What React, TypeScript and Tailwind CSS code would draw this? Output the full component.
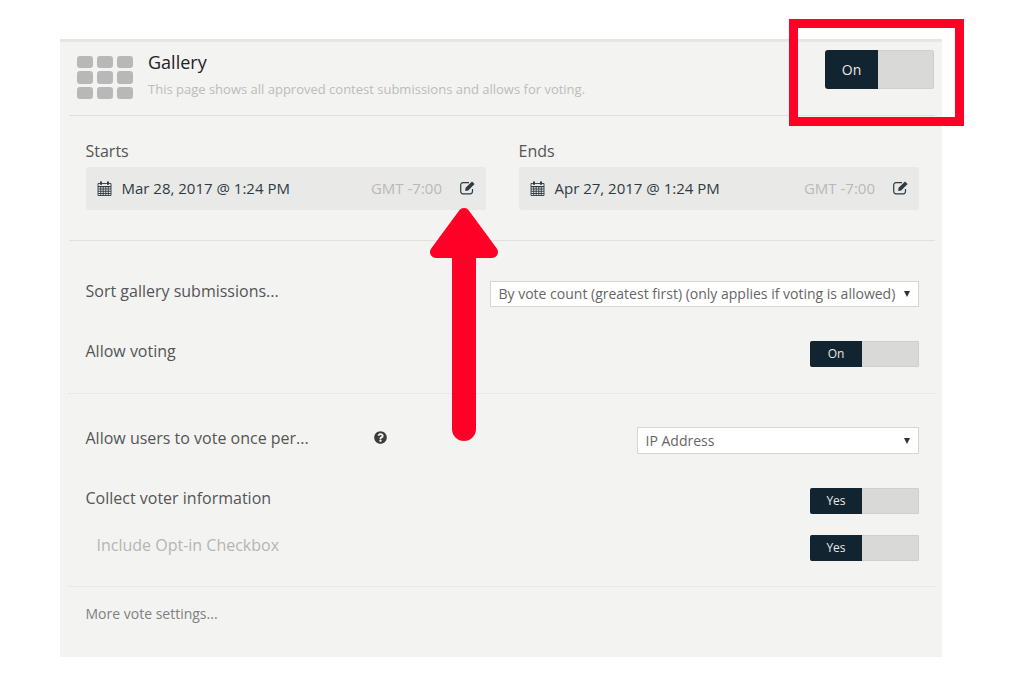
import { FaQuestionCircle } from "react-icons/fa";

function Toggle({ label, big }: { label: string; big?: boolean }) {
  return (
    <div className={`flex w-[109px] overflow-hidden ${big ? "h-[39px] rounded-[3px]" : "h-[26px] rounded-[2px]"}`}>
      <div
        className={`flex h-full shrink-0 items-center justify-center bg-[#11242f] text-[#e8e8e8] ${
          big ? "w-[53px] text-[14px]" : "w-[52px] text-[12px]"
        }`}
      >
        {label}
      </div>
      <div className="flex-1 border-y border-r border-[#cfcfcd] bg-[#d9d9d7]" />
    </div>
  );
}

function CalendarIcon() {
  return (
    <svg width="15" height="15" viewBox="0 0 15 15" className="shrink-0 text-[#2f3b42]">
      <path
        d="M1 2.5h13v12H1z M1 8h13 M1 10.3h13 M1 12.5h13 M3.700 6v8.500 M6.200 6v8.500 M8.800 6v8.500 M11.300 6v8.500"
        fill="none"
        stroke="currentColor"
        strokeWidth="0.9"
      />
      <path d="M1 5.600h13" stroke="currentColor" strokeWidth="1.2" />
      <rect x="3" y="0.3" width="2" height="3.6" rx="0.9" fill="currentColor" />
      <rect x="10" y="0.3" width="2" height="3.6" rx="0.9" fill="currentColor" />
    </svg>
  );
}

function EditIcon() {
  return (
    <svg width="16" height="15" viewBox="0 0 16 15" className="-mt-[2px] ml-[18px] shrink-0 text-[#2f3b42]">
      <path
        d="M12.500 9v2.300c0 1.500-.9 2.500-2.300 2.500H3C1.600 13.800.7 12.800.7 11.300V5.200C.7 3.700 1.600 2.700 3 2.700H9"
        fill="none"
        stroke="currentColor"
        strokeWidth="1.2"
      />
      <path d="M5.600 7.800 12 1.400 14.600 4 8.200 10.400 5.200 11Z" fill="currentColor" />
    </svg>
  );
}

function DateField({ label, value }: { label: string; value: string }) {
  return (
    <div className="w-[400px]">
      <div className="-ml-[0.500px] h-[28px] text-[16px] leading-[24px] text-[#555]">{label}</div>
      <div className="flex h-[43px] items-center rounded-[2px] bg-[#e9e9e8] pl-[10.500px] pr-[10px]">
        <CalendarIcon />
        <span className="ml-[10px] text-[15px] text-[#2f3b42]">{value}</span>
        <span className="ml-auto text-[15px] text-[#b9b9b9]">GMT -7:00</span>
        <EditIcon />
      </div>
    </div>
  );
}

function Select({ value, width, textClass }: { value: string; width: string; textClass: string }) {
  return (
    <div className={`flex h-[26px] items-center justify-between border border-[#d6d6d6] bg-white pl-[7.500px] pr-[8px] text-[14px] text-[#666] ${width}`}>
      <span className={textClass}>{value}</span>
      <span className="h-0 w-0 border-x-[3.500px] border-t-[6px] border-x-transparent border-t-[#333]" />
    </div>
  );
}

export default function App() {
  return (
    <div className="relative h-[694px] w-[1028px] bg-white pt-[39px] font-['Open_Sans',sans-serif]">
      <div className="ml-[60px] h-[618px] w-[882px] border-t-[3px] border-[#e6e6e6] bg-[#f3f3f2] pl-[9px] pr-[7px]">
        {/* Header */}
        <div className="flex h-[74px] border-b border-[#e0e0e0] pl-[8px] pr-[1px] pt-[8px]">
          <div className="mt-[6px] grid h-[43px] w-[56px] grid-cols-3 gap-x-[4px] gap-y-[3px]">
            {Array.from({ length: 9 }).map((_, i) => (
              <div key={i} className="rounded-[3px] bg-[#b8b8b8]" />
            ))}
          </div>
          <div className="ml-[15px]">
            <div className="h-[24px] text-[18px] leading-[24px] text-[#222]">Gallery</div>
            <div className="mt-[6px] text-[13px] leading-[18px] text-[#bcbcbc]">
              This page shows all approved contest submissions and allows for voting.
            </div>
          </div>
          <div className="ml-auto">
            <Toggle label="On" big />
          </div>
        </div>

        {/* Dates */}
        <div className="h-[125px] border-b border-[#e0e0e0] pl-[17px] pr-[16px] pt-[23px]">
          <div className="flex gap-[33px]">
            <DateField label="Starts" value="Mar 28, 2017 @ 1:24 PM" />
            <DateField label="Ends" value="Apr 27, 2017 @ 1:24 PM" />
          </div>
        </div>

        {/* Sorting and voting */}
        <div className="h-[153px] border-b border-dotted border-[#e0e0e0] pl-[17px] pr-[16px] pt-[40px]">
          <div className="flex h-[26px] items-center justify-between">
            <span className="-ml-[0.500px] -mt-[6px] text-[16px] text-[#555]">Sort gallery submissions...</span>
            <Select
              value="By vote count (greatest first) (only applies if voting is allowed)"
              width="w-[429px]"
              textClass="-mt-[2px]"
            />
          </div>
          <div className="mt-[34px] flex h-[26px] items-center justify-between">
            <span className="-ml-[0.500px] -mt-[6px] text-[16px] text-[#555]">Allow voting</span>
            <Toggle label="On" />
          </div>
        </div>

        {/* Vote limits */}
        <div className="h-[193px] border-b border-dotted border-[#e0e0e0] pl-[17px] pr-[16px] pt-[33px]">
          <div className="flex h-[27px] items-center">
            <span className="-ml-[0.500px] -mt-[5px] w-[288px] text-[16px] text-[#555]">Allow users to vote once per...</span>
            <FaQuestionCircle className="-mt-[6px] text-[13px] text-[#3c3c3c]" />
            <div className="ml-auto">
              <Select value="IP Address" width="h-[27px] w-[282px]" textClass="" />
            </div>
          </div>
          <div className="mt-[34px] flex h-[26px] items-center justify-between">
            <span className="-ml-[0.500px] -mt-[7px] text-[16px] text-[#555]">Collect voter information</span>
            <Toggle label="Yes" />
          </div>
          <div className="mt-[21px] flex h-[26px] items-center justify-between pl-[11px]">
            <span className="-ml-[0.500px] -mt-[7px] text-[16px] text-[#b5b5b5]">Include Opt-in Checkbox</span>
            <Toggle label="Yes" />
          </div>
        </div>

        <div className="pl-[16.500px] pt-[17px] text-[14px] leading-[20px] text-[#808080]">More vote settings...</div>
      </div>

      {/* Annotations drawn over the screenshot */}
      <div className="absolute left-[789px] top-[19px] h-[107px] w-[175px] border-[9px] border-[#ff0027]" />
      <svg className="absolute left-[425px] top-[200px]" width="80" height="245" viewBox="0 0 80 245">
        <path d="M39 14 L11 52 L67 52 Z" fill="#ff0027" stroke="#ff0027" strokeWidth="12" strokeLinejoin="round" />
        <path d="M39 50 V229" fill="none" stroke="#ff0027" strokeWidth="24" strokeLinecap="round" />
      </svg>
    </div>
  );
}
